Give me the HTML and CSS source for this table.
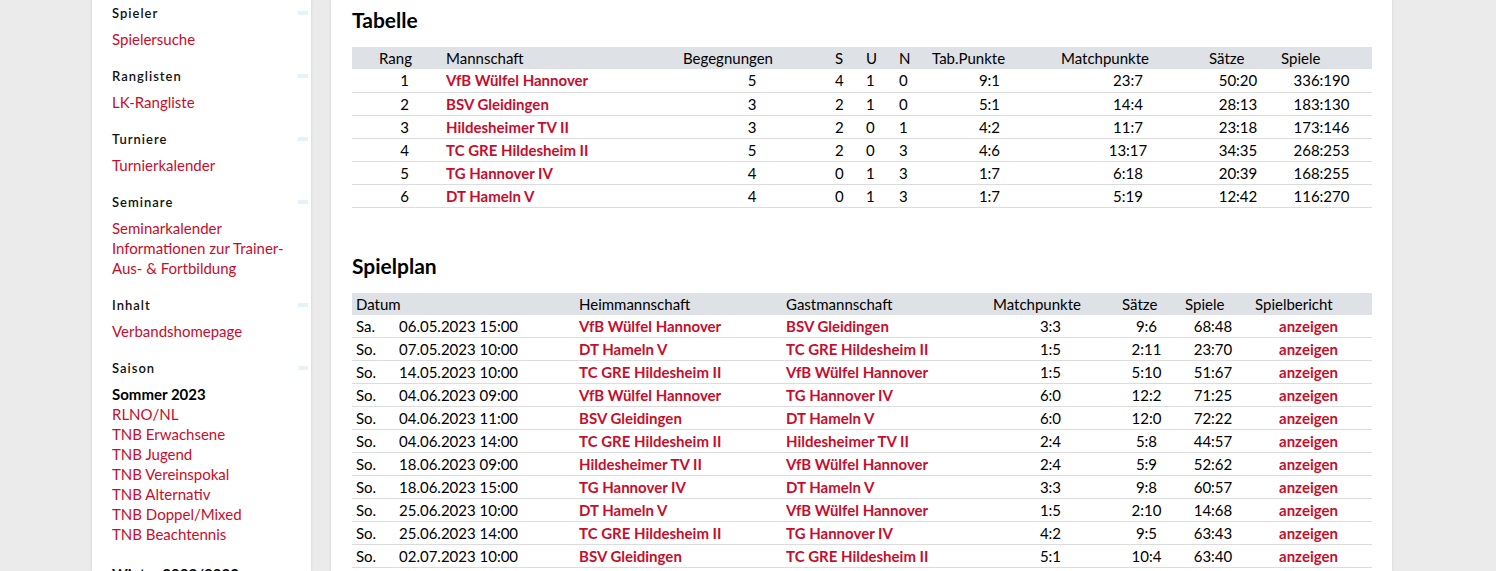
FILE: index.html
```html
<!DOCTYPE html>
<html lang="de">
<head>
<meta charset="utf-8">
<title>Gruppe – Tabelle und Spielplan</title>
<link rel="stylesheet" href="styles.css">
</head>
<body>
<div class="page">
  <aside class="sidebar">
    <section class="nav-group">
      <h3 class="nav-title">Spieler<span class="toggle"></span></h3>
      <ul class="nav-list">
        <li><a href="#">Spielersuche</a></li>
      </ul>
    </section>
    <section class="nav-group">
      <h3 class="nav-title">Ranglisten<span class="toggle"></span></h3>
      <ul class="nav-list">
        <li><a href="#">LK-Rangliste</a></li>
      </ul>
    </section>
    <section class="nav-group">
      <h3 class="nav-title">Turniere<span class="toggle"></span></h3>
      <ul class="nav-list">
        <li><a href="#">Turnierkalender</a></li>
      </ul>
    </section>
    <section class="nav-group">
      <h3 class="nav-title">Seminare<span class="toggle"></span></h3>
      <ul class="nav-list">
        <li><a href="#">Seminarkalender</a></li>
        <li><a href="#">Informationen zur Trainer-Aus- &amp; Fortbildung</a></li>
      </ul>
    </section>
    <section class="nav-group">
      <h3 class="nav-title">Inhalt<span class="toggle"></span></h3>
      <ul class="nav-list">
        <li><a href="#">Verbandshomepage</a></li>
      </ul>
    </section>
    <section class="nav-group">
      <h3 class="nav-title">Saison<span class="toggle"></span></h3>
      <ul class="nav-list season">
        <li class="current">Sommer 2023</li>
        <li><a href="#">RLNO/NL</a></li>
        <li><a href="#">TNB Erwachsene</a></li>
        <li><a href="#">TNB Jugend</a></li>
        <li><a href="#">TNB Vereinspokal</a></li>
        <li><a href="#">TNB Alternativ</a></li>
        <li><a href="#">TNB Doppel/Mixed</a></li>
        <li><a href="#">TNB Beachtennis</a></li>
      </ul>
      <ul class="nav-list season">
        <li class="current">Winter 2022/2023</li>
      </ul>
    </section>
  </aside>

  <main class="content">
    <h2 class="section-title">Tabelle</h2>
    <table class="result-table standings">
      <colgroup>
        <col class="c-rang"><col class="c-team"><col class="c-beg"><col class="c-s"><col class="c-u"><col class="c-n"><col class="c-tab"><col class="c-mp"><col class="c-saetze"><col class="c-spiele">
      </colgroup>
      <thead>
        <tr><th class="rang">Rang</th><th>Mannschaft</th><th>Begegnungen</th><th>S</th><th>U</th><th>N</th><th>Tab.Punkte</th><th>Matchpunkte</th><th>Sätze</th><th>Spiele</th></tr>
      </thead>
      <tbody>
        <tr><td class="rang">1</td><td><a href="#">VfB Wülfel Hannover</a></td><td class="num">5</td><td>4</td><td>1</td><td>0</td><td class="num">9:1</td><td class="num">23:7</td><td class="num">50:20</td><td class="num">336:190</td></tr>
        <tr><td class="rang">2</td><td><a href="#">BSV Gleidingen</a></td><td class="num">3</td><td>2</td><td>1</td><td>0</td><td class="num">5:1</td><td class="num">14:4</td><td class="num">28:13</td><td class="num">183:130</td></tr>
        <tr><td class="rang">3</td><td><a href="#">Hildesheimer TV II</a></td><td class="num">3</td><td>2</td><td>0</td><td>1</td><td class="num">4:2</td><td class="num">11:7</td><td class="num">23:18</td><td class="num">173:146</td></tr>
        <tr><td class="rang">4</td><td><a href="#">TC GRE Hildesheim II</a></td><td class="num">5</td><td>2</td><td>0</td><td>3</td><td class="num">4:6</td><td class="num">13:17</td><td class="num">34:35</td><td class="num">268:253</td></tr>
        <tr><td class="rang">5</td><td><a href="#">TG Hannover IV</a></td><td class="num">4</td><td>0</td><td>1</td><td>3</td><td class="num">1:7</td><td class="num">6:18</td><td class="num">20:39</td><td class="num">168:255</td></tr>
        <tr><td class="rang">6</td><td><a href="#">DT Hameln V</a></td><td class="num">4</td><td>0</td><td>1</td><td>3</td><td class="num">1:7</td><td class="num">5:19</td><td class="num">12:42</td><td class="num">116:270</td></tr>
      </tbody>
    </table>

    <h2 class="section-title spaced">Spielplan</h2>
    <table class="result-table schedule">
      <colgroup>
        <col class="c-day"><col class="c-date"><col class="c-home"><col class="c-guest"><col class="c-smp"><col class="c-ssaetze"><col class="c-sspiele"><col class="c-report">
      </colgroup>
      <thead>
        <tr><th colspan="2">Datum</th><th>Heimmannschaft</th><th>Gastmannschaft</th><th>Matchpunkte</th><th>Sätze</th><th>Spiele</th><th>Spielbericht</th></tr>
      </thead>
      <tbody>
        <tr><td>Sa.</td><td>06.05.2023 15:00</td><td><a href="#">VfB Wülfel Hannover</a></td><td><a href="#">BSV Gleidingen</a></td><td class="num">3:3</td><td class="num">9:6</td><td class="num">68:48</td><td class="num"><a href="#">anzeigen</a></td></tr>
        <tr><td>So.</td><td>07.05.2023 10:00</td><td><a href="#">DT Hameln V</a></td><td><a href="#">TC GRE Hildesheim II</a></td><td class="num">1:5</td><td class="num">2:11</td><td class="num">23:70</td><td class="num"><a href="#">anzeigen</a></td></tr>
        <tr><td>So.</td><td>14.05.2023 10:00</td><td><a href="#">TC GRE Hildesheim II</a></td><td><a href="#">VfB Wülfel Hannover</a></td><td class="num">1:5</td><td class="num">5:10</td><td class="num">51:67</td><td class="num"><a href="#">anzeigen</a></td></tr>
        <tr><td>So.</td><td>04.06.2023 09:00</td><td><a href="#">VfB Wülfel Hannover</a></td><td><a href="#">TG Hannover IV</a></td><td class="num">6:0</td><td class="num">12:2</td><td class="num">71:25</td><td class="num"><a href="#">anzeigen</a></td></tr>
        <tr><td>So.</td><td>04.06.2023 11:00</td><td><a href="#">BSV Gleidingen</a></td><td><a href="#">DT Hameln V</a></td><td class="num">6:0</td><td class="num">12:0</td><td class="num">72:22</td><td class="num"><a href="#">anzeigen</a></td></tr>
        <tr><td>So.</td><td>04.06.2023 14:00</td><td><a href="#">TC GRE Hildesheim II</a></td><td><a href="#">Hildesheimer TV II</a></td><td class="num">2:4</td><td class="num">5:8</td><td class="num">44:57</td><td class="num"><a href="#">anzeigen</a></td></tr>
        <tr><td>So.</td><td>18.06.2023 09:00</td><td><a href="#">Hildesheimer TV II</a></td><td><a href="#">VfB Wülfel Hannover</a></td><td class="num">2:4</td><td class="num">5:9</td><td class="num">52:62</td><td class="num"><a href="#">anzeigen</a></td></tr>
        <tr><td>So.</td><td>18.06.2023 15:00</td><td><a href="#">TG Hannover IV</a></td><td><a href="#">DT Hameln V</a></td><td class="num">3:3</td><td class="num">9:8</td><td class="num">60:57</td><td class="num"><a href="#">anzeigen</a></td></tr>
        <tr><td>So.</td><td>25.06.2023 10:00</td><td><a href="#">DT Hameln V</a></td><td><a href="#">VfB Wülfel Hannover</a></td><td class="num">1:5</td><td class="num">2:10</td><td class="num">14:68</td><td class="num"><a href="#">anzeigen</a></td></tr>
        <tr><td>So.</td><td>25.06.2023 14:00</td><td><a href="#">TC GRE Hildesheim II</a></td><td><a href="#">TG Hannover IV</a></td><td class="num">4:2</td><td class="num">9:5</td><td class="num">63:43</td><td class="num"><a href="#">anzeigen</a></td></tr>
        <tr><td>So.</td><td>02.07.2023 10:00</td><td><a href="#">BSV Gleidingen</a></td><td><a href="#">TC GRE Hildesheim II</a></td><td class="num">5:1</td><td class="num">10:4</td><td class="num">63:40</td><td class="num"><a href="#">anzeigen</a></td></tr>
      </tbody>
    </table>
  </main>
</div>
</body>
</html>
```

FILE: styles.css
```css
* { box-sizing: border-box; }

html, body {
  margin: 0;
  padding: 0;
}

body {
  background: #ebebeb;
  font-family: "Lato", "Liberation Sans", sans-serif;
  font-size: 15px;
  color: #000;
}

a {
  color: #c70d2c;
  text-decoration: none;
}

.page {
  display: flex;
  align-items: stretch;
  gap: 20px;
  padding-left: 92px;
  height: 100vh;
  overflow: hidden;
}

/* ---------- Sidebar ---------- */
.sidebar {
  width: 219px;
  flex: none;
  background: #fff;
  box-shadow: 0 0 3px rgba(0, 0, 0, 0.12);
  padding: 3px 3px 0 20px;
}

.nav-group {
  margin-bottom: 17px;
}

.nav-title {
  display: flex;
  justify-content: space-between;
  align-items: center;
  margin: 0;
  font-size: 13px;
  line-height: 20px;
  font-weight: 600;
  letter-spacing: 1px;
  color: #111;
}

.toggle {
  width: 10px;
  height: 4px;
  background: #e5f1fb;
}

.nav-list {
  list-style: none;
  margin: 6px 0 0;
  padding: 0 14px 0 0;
  line-height: 20px;
}

.nav-list.season + .nav-list.season {
  margin-top: 20px;
}

.nav-list .current {
  font-weight: 700;
  color: #000;
}

/* ---------- Content ---------- */
.content {
  width: 1061px;
  flex: none;
  background: #fff;
  box-shadow: 0 0 3px rgba(0, 0, 0, 0.12);
  padding: 7px 20px 0 21px;
}

.section-title {
  margin: 0 0 14px;
  font-size: 21px;
  line-height: 26px;
  font-weight: 700;
}

.section-title.spaced {
  margin-top: 45px;
}

.result-table {
  width: 1020px;
  border-collapse: collapse;
  table-layout: fixed;
}

.result-table th {
  background: #dee1e5;
  font-weight: 400;
  text-align: left;
  height: 22px;
  line-height: 22px;
  padding: 0 4px;
  white-space: nowrap;
}

.result-table td {
  height: 23px;
  line-height: 22px;
  padding: 0 4px;
  border-bottom: 1px solid #dcdcdc;
  white-space: nowrap;
}

.result-table td a {
  font-weight: 700;
}

.result-table td.num {
  text-align: center;
  padding-right: 7px;
  padding-left: 1px;
}

.standings th.rang {
  text-align: right;
  padding-right: 30px;
}

.standings td.rang {
  text-align: right;
  padding-right: 33px;
}

/* standings columns */
.c-rang { width: 90px; }
.c-team { width: 237px; }
.c-beg { width: 152px; }
.c-s { width: 31px; }
.c-u { width: 33px; }
.c-n { width: 33px; }
.c-tab { width: 129px; }
.c-mp { width: 148px; }
.c-saetze { width: 72px; }
.c-spiele { width: 95px; }

/* schedule columns */
.c-day { width: 43px; }
.c-date { width: 180px; }
.c-home { width: 207px; }
.c-guest { width: 207px; }
.c-smp { width: 129px; }
.c-ssaetze { width: 63px; }
.c-sspiele { width: 70px; }
.c-report { width: 121px; }
```
